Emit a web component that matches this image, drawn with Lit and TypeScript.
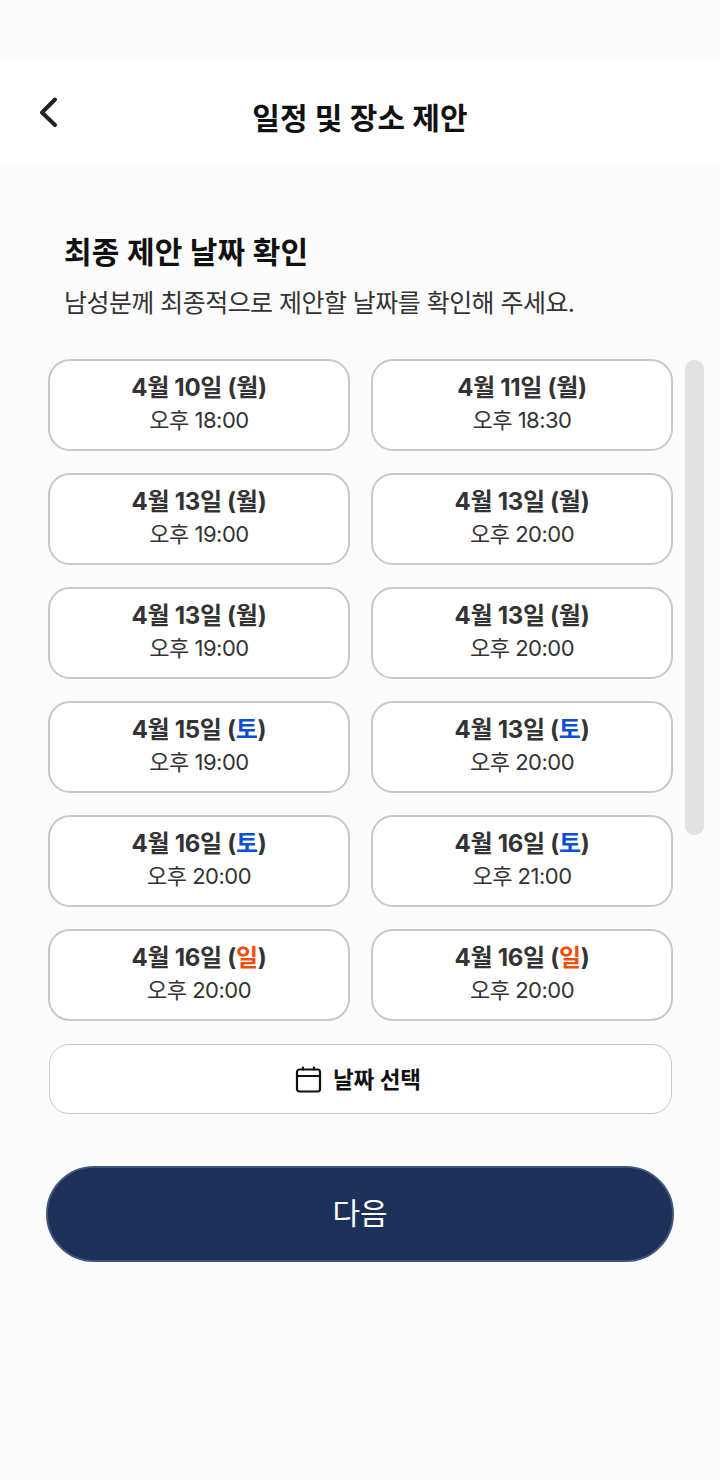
import { LitElement, html, css } from "lit";
import { customElement } from "lit/decorators.js";

type Slot = { d: string; w: string; c?: "sat" | "sun"; t: string };
const slots: Slot[] = [
  { d: "4월 10일", w: "월", t: "오후 18:00" },
  { d: "4월 11일", w: "월", t: "오후 18:30" },
  { d: "4월 13일", w: "월", t: "오후 19:00" },
  { d: "4월 13일", w: "월", t: "오후 20:00" },
  { d: "4월 13일", w: "월", t: "오후 19:00" },
  { d: "4월 13일", w: "월", t: "오후 20:00" },
  { d: "4월 15일", w: "토", c: "sat", t: "오후 19:00" },
  { d: "4월 13일", w: "토", c: "sat", t: "오후 20:00" },
  { d: "4월 16일", w: "토", c: "sat", t: "오후 20:00" },
  { d: "4월 16일", w: "토", c: "sat", t: "오후 21:00" },
  { d: "4월 16일", w: "일", c: "sun", t: "오후 20:00" },
  { d: "4월 16일", w: "일", c: "sun", t: "오후 20:00" },
];

@customElement("app-root")
export class AppRoot extends LitElement {
  static styles = css`
    :host {
      display: block;
      box-sizing: border-box;
      height: 1480px;
      padding-top: 58px;
      background: #fcfcfc;
      font-family: Inter, "Noto Sans CJK KR", sans-serif;
      color: #111;
    }
    .header {
      position: relative;
      height: 108px;
      background: #fff;
      display: flex;
      align-items: center;
      justify-content: center;
    }
    .header h1 { margin: 0; padding-top: 12px; font-size: 30px; font-weight: 700; line-height: 40px; letter-spacing: 0.1px; }
    .back { position: absolute; left: 36px; top: 36px; width: 24px; height: 36px; }
    .intro { padding: 66px 0 0 64px; }
    .intro h2 { margin: 0; font-size: 30px; font-weight: 700; line-height: 40px; color: #111; letter-spacing: 0.2px; }
    .intro p { margin: 13px 0 0; font-size: 25px; line-height: 36px; color: #333; font-weight: 400; letter-spacing: -0.55px; }
    .list { margin: 38px 16px 0 48px; display: flex; gap: 12px; align-items: flex-start; }
    .grid { width: 625px; display: grid; grid-template-columns: 302px 302px; column-gap: 21px; row-gap: 22px; }
    .card {
      height: 92px; box-sizing: border-box; border: 2px solid #c8c8c8; border-radius: 22px; background: #fff; padding-bottom: 2px;
      display: flex; flex-direction: column; align-items: center; justify-content: center; color: #333;
    }
    .d { font-size: 24px; font-weight: 700; line-height: 32px; letter-spacing: -0.3px; }
    .t { font-size: 22px; line-height: 32px; color: #333; letter-spacing: -0.5px; }
    .sat { color: #0a4fd6; }
    .sun { color: #f04e0e; }
    .bar { width: 19px; height: 475px; margin-top: 1px; background: #e2e2e2; border-radius: 9px; }
    .pick {
      margin: 23px 0 0 49px; width: 623px; height: 70px; box-sizing: border-box; border: 1px solid #c8c8c8; padding: 0 5px 2px 0;
      border-radius: 20px; background: #fff; display: flex; align-items: center; justify-content: center; gap: 10px;
      font-size: 22.5px; font-weight: 700; color: #111;
    }
    .pick svg { margin-top: 2px; }
    .next {
      margin: 52px 0 0 46px; width: 628px; height: 96px; box-sizing: border-box; border: 2px solid #42557f; padding-bottom: 6px;
      border-radius: 48px; background: #1d3057; color: #fff; display: flex; align-items: center; justify-content: center;
      font-size: 30px; font-weight: 400;
    }
  `;
  render() {
    return html`
      <div class="header">
        <svg class="back" viewBox="0 0 24 36" fill="none" stroke="#222" stroke-width="4" stroke-linecap="round" stroke-linejoin="round"><path d="M19 5.5 6 18.5l13 12.5"/></svg>
        <h1>일정 및 장소 제안</h1>
      </div>
      <div class="intro">
        <h2>최종 제안 날짜 확인</h2>
        <p>남성분께 최종적으로 제안할 날짜를 확인해 주세요.</p>
      </div>
      <div class="list">
        <div class="grid">
          ${slots.map(
            (s) => html`<div class="card">
              <div class="d">${s.d} (<span class=${s.c ?? ""}>${s.w}</span>)</div>
              <div class="t">${s.t}</div>
            </div>`
          )}
        </div>
        <div class="bar"></div>
      </div>
      <div class="pick">
        <svg width="28" height="28" viewBox="0 0 28 28" fill="none" stroke="#111" stroke-width="2.2" stroke-linecap="round"><rect x="2" y="4.5" width="23" height="22" rx="2.5"/><path d="M2 11h23M8 2.5v2M19 2.5v2"/></svg>
        <span>날짜 선택</span>
      </div>
      <div class="next">다음</div>
    `;
  }
}
